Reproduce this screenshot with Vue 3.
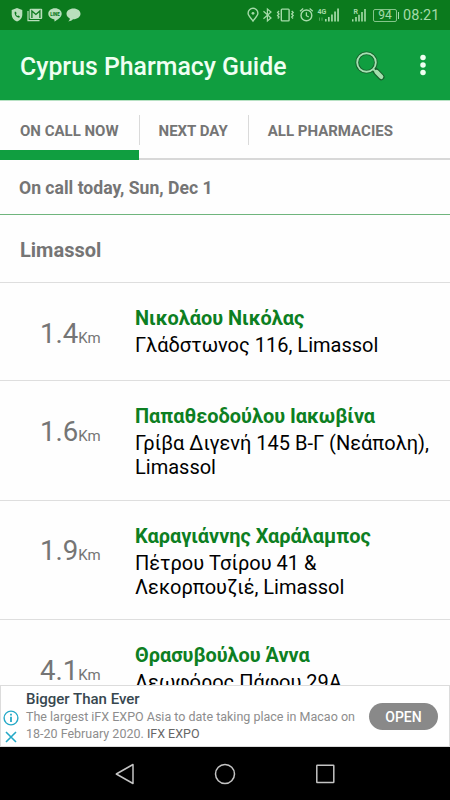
<template>
  <div class="screen">
    <!-- Android status bar -->
    <div class="status-bar">
      <div class="status-left">
        <svg width="12" height="14" viewBox="0 0 12 14">
          <path d="M6 0L11.3 2V6.5C11.3 10 9 12.5 6 13.6C3 12.5 .7 10 .7 6.5V2Z" fill="#b9dfbc" />
          <path d="M3.7 3.8C3.3 6.8 5 9.3 8.3 9.8L8.8 8.3L7.2 7.5L6.5 8.1C5.6 7.6 5.1 6.9 4.9 6L5.6 5.4L5 3.7Z" fill="#0b7a1d" />
        </svg>
        <svg width="16" height="14" viewBox="0 0 16 14">
          <path d="M1 3V12.7H12.5" fill="none" stroke="#b9dfbc" stroke-width="1.2" />
          <rect x="2.6" y=".8" width="12.6" height="10.2" rx="1" fill="#b9dfbc" />
          <path d="M4.9 10V3L8.9 6.4L12.9 3V10" fill="none" stroke="#0b7a1d" stroke-width="1.3" />
        </svg>
        <svg width="14" height="14" viewBox="0 0 14 14">
          <path d="M7 .3C3.2 .3 .3 2.7 .3 5.8C.3 8.6 2.7 10.8 6 11.2C6.7 11.4 6.5 12.2 6.4 13.6C9.5 12 13.7 9.1 13.7 5.8C13.7 2.7 10.8 .3 7 .3Z" fill="#b9dfbc" />
          <text x="7" y="7.5" class="line-label" text-anchor="middle">LINE</text>
        </svg>
        <svg width="15" height="14" viewBox="0 0 15 14">
          <path d="M7.5 .4C3.5 .4 .5 2.7 .5 5.8C.5 7.8 1.8 9.5 3.8 10.5C3.8 11.8 3.1 12.7 2.4 13.4C4.5 13.2 6 12.4 7 11.3C11.2 11.4 14.5 9 14.5 5.8C14.5 2.7 11.5 .4 7.5 .4Z" fill="#b9dfbc" />
        </svg>
      </div>
      <svg class="status-icons" width="128" height="20" viewBox="0 0 128 20" fill="none" stroke="#a5dba9" stroke-width="1.4">
        <path d="M6 16C3.7 13 1.1 10.5 1.1 8.2A4.9 4.9 0 0 1 10.9 8.2C10.9 10.5 8.3 13 6 16Z" />
        <circle cx="6" cy="8.3" r="1.4" fill="#a5dba9" stroke="none" />
        <path d="M16.5 6.3L24 13L20.4 16V4L24 7L16.5 13.7" stroke-width="1.2" />
        <rect x="34.3" y="4.1" width="7.8" height="11.8" rx=".8" />
        <path d="M32 6L30.6 7.5L32 9L30.6 10.5L32 12L30.8 13.5M44.7 6L46.2 7.5L44.7 9L46.2 10.5L44.7 12L46 13.5" stroke-width="1.3" />
        <circle cx="59.4" cy="10.4" r="5.4" />
        <path d="M59.4 7.2V10.7L61.8 12M53 6.3L56.2 3.5M62.6 3.5L65.8 6.3" stroke-width="1.3" />
        <text x="70.5" y="9" class="net-label">4G</text>
        <g fill="#a5dba9" stroke="none">
          <path d="M72 12.5H73V15.8H72ZM74.5 12.5H75.5V15.8H74.5Z" opacity=".45" />
          <path d="M78 14H79.6V16.5H78ZM81 12H82.7V16.5H81ZM84.1 9.5H85.8V16.5H84.1ZM87.2 6.5H88.9V16.5H87.2ZM90.2 3.5H91.9V16.5H90.2Z" />
          <path d="M105 14.2H106.5V16.5H105ZM108.2 12H109.8V16.5H108.2ZM111.2 9.8H112.8V16.5H111.2ZM114.2 7H115.8V16.5H114.2ZM117.2 4H118.8V16.5H117.2Z" />
        </g>
        <text x="106.5" y="8.5" class="net-label">R</text>
      </svg>
      <div class="battery">94</div>
      <div class="clock">08:21</div>
    </div>

    <header class="toolbar">
      <h1>Cyprus Pharmacy Guide</h1>
      <svg class="search" width="30" height="30" viewBox="0 0 30 30">
        <path d="M21 20.5L26.3 26" stroke="#175f2c" stroke-width="6.4" stroke-linecap="round" />
        <circle cx="11.5" cy="11.5" r="9.3" fill="none" stroke="#175f2c" stroke-width="3.6" />
        <path d="M18 18L21 21" stroke="#9bdda7" stroke-width="1.8" />
        <circle cx="11.5" cy="11.5" r="9.3" fill="none" stroke="#a4e2b2" stroke-width="1.9" />
        <path d="M21.6 21L26.2 25.8" stroke="#a4dfad" stroke-width="4.4" stroke-linecap="round" />
      </svg>
      <svg class="more" width="6" height="22" viewBox="0 0 6 22" fill="#effff2">
        <circle cx="3" cy="3.4" r="2.75" />
        <circle cx="3" cy="11" r="2.75" />
        <circle cx="3" cy="18.6" r="2.75" />
      </svg>
    </header>

    <nav class="tabs">
      <button v-for="tab in tabs" :key="tab" class="tab" :class="{ active: tab === activeTab }" @click="activeTab = tab">
        {{ tab }}
      </button>
    </nav>

    <div class="date-row">On call today, Sun, Dec 1</div>

    <main class="list">
      <div class="city">Limassol</div>
      <div v-for="item in pharmacies" :key="item.name" class="pharmacy">
        <div class="distance">{{ item.km }}<small>Km</small></div>
        <div class="info">
          <div class="name">{{ item.name }}</div>
          <div v-for="line in item.address" :key="line" class="address">{{ line }}</div>
        </div>
      </div>
    </main>

    <div class="ad">
      <div class="ad-marks">
        <svg width="16" height="16" viewBox="0 0 16 16" fill="none" stroke="#25a9c7">
          <circle cx="8" cy="8" r="6.9" stroke-width="1.4" />
          <path d="M8 6.7V12M8 3.8V5.5" stroke-width="1.8" />
        </svg>
        <svg width="12" height="12" viewBox="0 0 12 12" fill="none" stroke="#25a9c7" stroke-width="1.6">
          <path d="M1 1L11 11M11 1L1 11" />
        </svg>
      </div>
      <div class="ad-text">
        <div class="ad-title">Bigger Than Ever</div>
        <div class="ad-line">The largest iFX EXPO Asia to date taking place in Macao on</div>
        <div class="ad-line">18-20 February 2020. <span>IFX EXPO</span></div>
      </div>
      <button class="open-btn">OPEN</button>
    </div>

    <!-- System navigation -->
    <div class="nav-bar">
      <svg width="20" height="22" viewBox="0 0 20 22" fill="none" stroke="#c4c4c4" stroke-width="1.5">
        <path d="M19 1.5V20.5L2.3 11Z" stroke-linejoin="round" />
      </svg>
      <svg width="22" height="22" viewBox="0 0 22 22" fill="none" stroke="#c4c4c4" stroke-width="1.5">
        <circle cx="11" cy="11" r="9.5" />
      </svg>
      <svg width="20" height="20" viewBox="0 0 20 20" fill="none" stroke="#c4c4c4" stroke-width="1.5">
        <rect x=".8" y="1.2" width="17" height="17.4" rx=".5" />
      </svg>
    </div>
  </div>
</template>

<script setup>
import { ref } from 'vue';

const tabs = ['ON CALL NOW', 'NEXT DAY', 'ALL PHARMACIES'];
const activeTab = ref('ON CALL NOW');

const pharmacies = [
  { km: '1.4', name: 'Νικολάου Νικόλας', address: ['Γλάδστωνος 116, Limassol'] },
  { km: '1.6', name: 'Παπαθεοδούλου Ιακωβίνα', address: ['Γρίβα Διγενή 145 Β-Γ (Νεάπολη),', 'Limassol'] },
  { km: '1.9', name: 'Καραγιάννης Χαράλαμπος', address: ['Πέτρου Τσίρου 41 &', 'Λεκορπουζιέ, Limassol'] },
  { km: '4.1', name: 'Θρασυβούλου Άννα', address: ['Λεωφόρος Πάφου 29Α'] }
];
</script>

<style>
body {
  margin: 0;
}
</style>

<style scoped>
.screen {
  width: 450px;
  height: 800px;
  display: flex;
  flex-direction: column;
  overflow: hidden;
  background: #fefefe;
  font-family: Roboto, 'Noto Sans', sans-serif;
  white-space: nowrap;
}

.screen * {
  box-sizing: border-box;
}

button {
  border: none;
  padding: 0;
  font-family: inherit;
  cursor: pointer;
}

svg {
  display: block;
  flex: none;
}

/* Status bar */
.status-bar {
  height: 30px;
  flex: none;
  display: flex;
  align-items: center;
  padding-left: 11px;
  background: #0b7a1d;
}

.status-left {
  display: flex;
  gap: 4.3px;
  width: 236px;
}

.line-label {
  font-size: 4.5px;
  font-weight: 900;
  fill: #0b7a1d;
}

.net-label {
  font-size: 7px;
  font-weight: 700;
  fill: #a5dba9;
  stroke: none;
}

.battery {
  position: relative;
  width: 24px;
  height: 13px;
  margin-left: -2px;
  border: 1px solid #84c58a;
  border-radius: 2px;
  color: #a5dba9;
  font-size: 12px;
  line-height: 11.5px;
  text-align: center;
}

.battery::after {
  content: '';
  position: absolute;
  right: -3px;
  top: 2px;
  width: 1px;
  height: 7px;
  background: #a5dba9;
}

.clock {
  margin: 1px 0 0 6px;
  color: #a5dba9;
  font-size: 14.5px;
  letter-spacing: 0.1px;
}

/* Toolbar */
.toolbar {
  height: 70px;
  flex: none;
  display: flex;
  align-items: center;
  padding-left: 20px;
  background: #109e40;
}

.toolbar h1 {
  width: 335px;
  margin: 3px 0 0;
  color: #effff2;
  font-size: 24.85px;
  font-weight: 500;
}

.search {
  margin-top: 2px;
}

.more {
  margin-left: 34.5px;
}

/* Tabs */
.tabs {
  height: 60px;
  flex: none;
  display: flex;
  border-top: 1px solid #b8e2c4;
  border-bottom: 2px solid #d8d8d8;
}

.tab {
  position: relative;
  height: 59px;
  padding: 1px 20px 0;
  background: transparent;
  color: #757575;
  font-size: 15px;
  font-weight: 700;
}

.tab + .tab::before {
  content: '';
  position: absolute;
  left: 0;
  top: 14px;
  width: 1px;
  height: 30px;
  background: #dadada;
}

.tab.active::after {
  content: '';
  position: absolute;
  left: 0;
  right: 0;
  bottom: 0;
  height: 10px;
  background: #109e40;
}

/* List */
.date-row {
  height: 55px;
  flex: none;
  padding-left: 19px;
  border-bottom: 1px solid #6fb57d;
  color: #757575;
  font-size: 17.6px;
  font-weight: 700;
  line-height: 57px;
}

.list {
  height: 470px;
  flex: none;
  overflow: hidden;
}

.city {
  height: 68px;
  padding-left: 20px;
  border-bottom: 1px solid #dedede;
  color: #757575;
  font-size: 20px;
  font-weight: 700;
  line-height: 70px;
}

.pharmacy {
  display: flex;
  padding: 23px 0 20.5px;
  border-bottom: 1px solid #dedede;
}

.pharmacy:nth-child(2) {
  padding-bottom: 23px;
}

.distance {
  width: 135px;
  padding: 10.5px 0 0 40px;
  color: #757575;
  font-size: 27.6px;
  line-height: 34px;
}

.distance small {
  font-size: 15px;
}

.name {
  height: 27px;
  color: #0d7f22;
  font-size: 19.95px;
  font-weight: 700;
  line-height: 24px;
}

.address {
  color: #000;
  font-size: 20px;
  line-height: 24px;
}

/* Ad banner */
.ad {
  height: 62px;
  flex: none;
  display: flex;
  border: 1px solid #dcdcdc;
  background: #fff;
}

.ad-marks {
  width: 25px;
  padding: 24px 7px 0 1px;
  display: flex;
  flex-direction: column;
  align-items: center;
  gap: 5px;
}

.ad-text {
  width: 343px;
  padding-top: 4px;
}

.ad-title {
  height: 19px;
  color: #37474f;
  font-size: 15px;
  font-weight: 500;
  line-height: 19px;
}

.ad-line {
  color: #8d8d8d;
  font-size: 12.5px;
  line-height: 16.5px;
}

.ad-line span {
  color: #666;
}

.open-btn {
  width: 69px;
  height: 27px;
  margin-top: 17px;
  border-radius: 14px;
  background: #898989;
  color: #fff;
  font-size: 14px;
  font-weight: 500;
}

/* Navigation bar */
.nav-bar {
  height: 53px;
  flex: none;
  display: flex;
  align-items: center;
  justify-content: center;
  gap: 80px;
  background: #000;
}
</style>
